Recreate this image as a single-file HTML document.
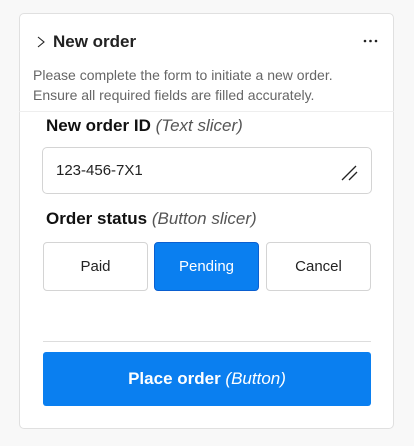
<!DOCTYPE html>
<html><head><style>
body{margin:0;width:414px;height:446px;background:#f8f8f8;font-family:"Liberation Sans",sans-serif;position:relative;overflow:hidden}
.a{position:absolute}
.card{left:19px;top:13px;width:375px;height:416px;background:#fff;border:1px solid #e0e0e0;border-radius:5px;box-sizing:border-box}
.btn{top:242px;height:49px;width:105px;box-sizing:border-box;border:1px solid #d4d4d4;border-radius:4px;background:#fff;display:flex;align-items:center;justify-content:center;font-size:15px;color:#222}
</style></head><body>
<div class="a card"></div>
<svg class="a" style="left:35px;top:35px" width="12" height="14"><path d="M3 2 L9 7 L3 12" fill="none" stroke="#222" stroke-width="1.1"/></svg>
<div class="a" style="left:53px;top:32px;font-size:17px;color:#222;font-weight:bold">New order</div>
<svg class="a" style="left:363px;top:39px" width="16" height="4"><circle cx="2" cy="2" r="1.3" fill="#222"/><circle cx="7.5" cy="2" r="1.3" fill="#222"/><circle cx="13" cy="2" r="1.3" fill="#222"/></svg>
<div class="a" style="left:33px;top:65px;font-size:14px;color:#666;line-height:20px">Please complete the form to initiate a new order.<br>Ensure all required fields are filled accurately.</div>
<div class="a" style="left:19px;top:111px;width:375px;height:1px;background:#eee"></div>
<div class="a" style="left:46px;top:116px;font-size:17px;color:#111;font-weight:bold">New order ID <i style="color:#555;font-weight:normal">(Text slicer)</i></div>
<div class="a" style="left:42px;top:147px;width:330px;height:47px;border:1px solid #d4d4d4;border-radius:5px;box-sizing:border-box"></div>
<div class="a" style="left:56px;top:162px;font-size:15px;color:#222">123-456-7X1</div>
<svg class="a" style="left:340px;top:163px" width="20" height="20"><path d="M2 17 L16 3 M9 17 L17 9" stroke="#222" stroke-width="1.3"/></svg>
<div class="a" style="left:46px;top:209px;font-size:17px;color:#111;font-weight:bold">Order status <i style="color:#555;font-weight:normal">(Button slicer)</i></div>
<div class="a btn" style="left:43px">Paid</div>
<div class="a btn" style="left:154px;background:#0a7ff0;border-color:#0a5fd0;color:#fff">Pending</div>
<div class="a btn" style="left:266px">Cancel</div>
<div class="a" style="left:43px;top:341px;width:328px;height:1px;background:#ddd"></div>
<div class="a" style="left:43px;top:352px;width:328px;height:54px;background:#0a7ff0;border-radius:3px;display:flex;align-items:center;justify-content:center;color:#fff;font-size:17px;font-weight:bold">Place order&nbsp;<i style="font-weight:normal">(Button)</i></div>
</body></html>
